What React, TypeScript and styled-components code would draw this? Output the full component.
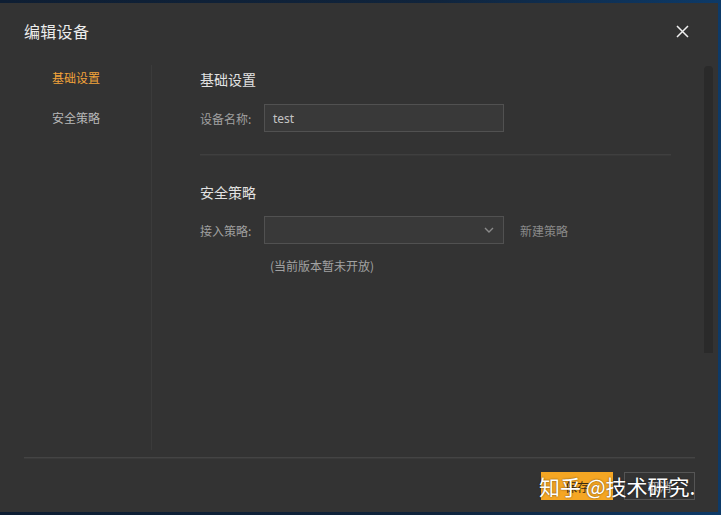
import React from "react";
import styled, { createGlobalStyle } from "styled-components";

const Global = createGlobalStyle`
  html, body { margin: 0; padding: 0; }
  body {
    width: 721px;
    height: 515px;
    overflow: hidden;
    background: #102238;
    font-family: "Noto Sans CJK SC", "Noto Sans", sans-serif;
  }
`;

const Screen = styled.div`
  width: 721px;
  height: 515px;
  padding: 3px 3px 3px 0;
  box-sizing: border-box;
  background: linear-gradient(90deg, #0e1e33 0%, #10243c 60%, #0d3a68 100%);
  position: relative;
`;

const Dialog = styled.div`
  width: 718px;
  height: 509px;
  background: #333333;
  display: flex;
  flex-direction: column;
  position: relative;
`;

const Header = styled.div`
  height: 56px;
  padding: 0 24px;
  display: flex;
  align-items: center;
  justify-content: space-between;
`;

const Title = styled.div`
  font-size: 16px;
  color: #ececec;
  letter-spacing: 0.3px;
`;

const Close = styled.button`
  width: 16px;
  height: 16px;
  border: 0;
  padding: 0;
  background: transparent;
  margin-right: 4px;
  display: flex;
  align-items: center;
  justify-content: center;
`;

const Body = styled.div`
  margin-top: 6px;
  height: 385px;
  display: flex;
`;

const Nav = styled.div`
  width: 99px;
  padding-left: 52px;
  border-right: 1px solid #3b3b3b;
  display: flex;
  flex-direction: column;
  gap: 14px;
`;

const NavItem = styled.div<{ $active?: boolean }>`
  height: 26px;
  line-height: 26px;
  font-size: 12px;
  color: ${(p) => (p.$active ? "#f2a33a" : "#b8b8b8")};
`;

const Content = styled.div`
  flex: 1;
  padding: 4px 33px 0 48px;
  display: flex;
  flex-direction: column;
`;

const SectionTitle = styled.div<{ $gap: number }>`
  font-size: 14px;
  line-height: 20px;
  color: #e2e2e2;
  margin-bottom: ${(p) => p.$gap}px;
`;

const Row = styled.div`
  display: flex;
  align-items: center;
  height: 28px;
`;

const Label = styled.div`
  width: 64px;
  font-size: 12px;
  color: #a0a0a0;
`;

const Field = styled.div`
  width: 240px;
  height: 28px;
  box-sizing: border-box;
  border: 1px solid #515151;
  background: #393939;
  display: flex;
  align-items: center;
  justify-content: space-between;
  padding: 0 9px 0 8px;
`;

const FieldText = styled.span`
  font-size: 12px;
  color: #c4c4c4;
  font-family: "Noto Sans", "Open Sans", sans-serif;
`;

const Divider = styled.div`
  height: 1px;
  background: #3f3f3f;
  border-bottom: 1px solid #383838;
  margin: 22px 0 26px;
`;

const LinkText = styled.span`
  font-size: 12px;
  color: #8a8a8a;
  margin-left: 16px;
`;

const Note = styled.div`
  margin: 14px 0 0 70px;
  font-size: 12px;
  line-height: 16px;
  color: #a2a2a2;
`;

const Track = styled.div`
  width: 9px;
  margin-right: 5px;
  padding-top: 1px;
`;

const Thumb = styled.div`
  height: 287px;
  background: #2a2a2a;
  border-radius: 4px 4px 0 0;
`;

const Footer = styled.div`
  margin: 7px 23px 0 24px;
  border-top: 1px solid #444444;
  box-shadow: 0 4px 0 -3px #3a3a3a inset;
  padding-top: 14px;
  display: flex;
  justify-content: flex-end;
  gap: 11px;
`;

const Button = styled.button<{ $primary?: boolean }>`
  width: ${(p) => (p.$primary ? "72px" : "71px")};
  height: 28px;
  box-sizing: border-box;
  border: 1px solid ${(p) => (p.$primary ? "#f5a623" : "#555555")};
  background: ${(p) => (p.$primary ? "#f5a623" : "transparent")};
  color: ${(p) => (p.$primary ? "#3a2a10" : "#bdbdbd")};
  font-size: 12px;
  font-family: "Noto Sans CJK SC", sans-serif;
  padding: 0;
`;

const Watermark = styled.div`
  position: absolute;
  left: 539px;
  top: 468px;
  font-size: 21px;
  line-height: 30px;
  color: #ffffff;
  font-family: "Noto Sans CJK SC", sans-serif;
  text-shadow: 0 0 2px rgba(0, 0, 0, 0.6);
  white-space: nowrap;
  pointer-events: none;
`;

export default function App() {
  return (
    <>
      <Global />
      <Screen>
        <Dialog>
          <Header>
            <Title>编辑设备</Title>
            <Close aria-label="close">
              <svg width="13" height="13" viewBox="0 0 13 13">
                <path d="M1 1L12 12M12 1L1 12" stroke="#f0f0f0" strokeWidth="1.5" />
              </svg>
            </Close>
          </Header>
          <Body>
            <Nav>
              <NavItem $active>基础设置</NavItem>
              <NavItem>安全策略</NavItem>
            </Nav>
            <Content>
              <SectionTitle $gap={15}>基础设置</SectionTitle>
              <Row>
                <Label>设备名称:</Label>
                <Field>
                  <FieldText>test</FieldText>
                </Field>
              </Row>
              <Divider />
              <SectionTitle $gap={14}>安全策略</SectionTitle>
              <Row>
                <Label>接入策略:</Label>
                <Field>
                  <span />
                  <svg width="10" height="6" viewBox="0 0 10 6">
                    <path d="M1 1L5 5L9 1" stroke="#8a8a8a" strokeWidth="1.4" fill="none" />
                  </svg>
                </Field>
                <LinkText>新建策略</LinkText>
              </Row>
              <Note>(当前版本暂未开放)</Note>
            </Content>
            <Track>
              <Thumb />
            </Track>
          </Body>
          <Footer>
            <Button $primary>保存</Button>
            <Button>取消</Button>
          </Footer>
          <Watermark>知乎 @技术研究.</Watermark>
        </Dialog>
      </Screen>
    </>
  );
}
